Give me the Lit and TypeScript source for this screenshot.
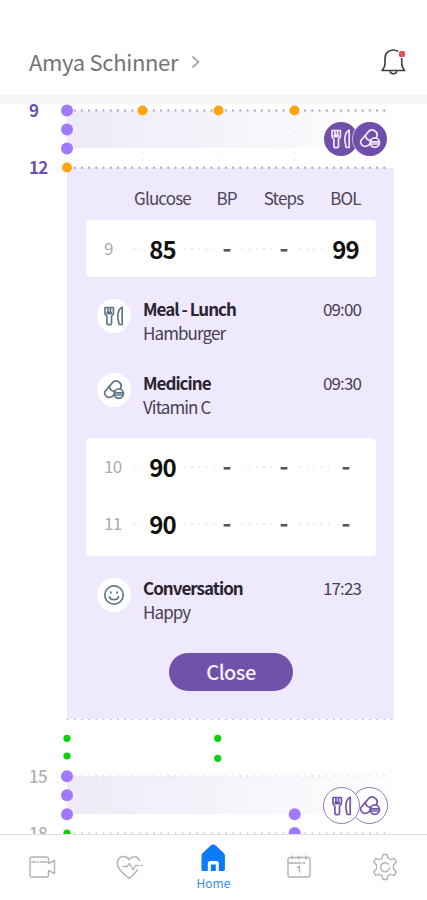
import { LitElement, html, svg, css } from "lit";
import { customElement, property } from "lit/decorators.js";

type Dot = [number, number, "violet" | "orange" | "green"];

const PALETTE = { violet: "#a179ff", orange: "#fda50f", green: "#0bd20b" };

const fork = svg`
  <path d="M1 1.500h8.400v5.800c0 1.500-.8 2.300-1.900 2.900v7c0 2-4.600 2-4.600 0v-7C1.800 9.600 1 8.800 1 7.300z"/>
  <path d="M3.900 1.800v4.400M6.500 1.800v4.400M3.200 6.400h4v1.300h-4z"/>
  <path d="M18.200 1.200v17.300h-2.400c-1 0-1.200-1-1.200-3.300-1.300-3.600-1.300-12 3.600-14z"/>`;

const pill = svg`
  <path d="M2 10.200 8.300 2.900a5 5 0 0 1 8.200 5.600M9.700 15c-2 2.500-5.200 3.100-7.300 1.300S-.2 12.100 2 10.200"/>
  <path d="M5.400 6.300c.2 3.300 2.600 5.200 5.600 5"/>
  <circle cx="14.800" cy="13.600" r="4.700"/>
  <path d="M10.400 12.800h8.800M10.600 15h8.400"/>`;

const smile = svg`
  <circle cx="10" cy="10" r="9.200"/>
  <path d="M5.400 11.800c1.200 3.900 8 3.900 9.200 0M6.900 7v1M13.100 7v1"/>`;

const GLYPHS: Record<string, unknown> = { fork, pill, smile };

@customElement("line-glyph")
class LineGlyph extends LitElement {
  @property() name = "fork";
  static styles = css`
    :host { display: block; width: 20px; height: 20px; }
    svg { display: block; width: 100%; height: 100%; overflow: visible; fill: none; stroke: currentColor; stroke-width: 1.7; stroke-linejoin: round; stroke-linecap: round; }
  `;
  render() {
    return html`<svg viewBox="0 0 20 20">${GLYPHS[this.name]}</svg>`;
  }
}

@customElement("app-root")
class AppRoot extends LitElement {
  static styles = css`
    :host {
      display: flex; flex-direction: column; width: 427px; height: 900px; overflow: hidden;
      background: #fff; color: #45404f;
      font-family: "Noto Sans CJK KR", "Noto Sans CJK SC", sans-serif;
      font-size: 17px;
    }
    * { box-sizing: border-box; }
    svg { display: block; }
    .header {
      flex: none; height: 104px; padding: 29px 20px 0 29px; border-bottom: 9px solid #f6f6f6;
      display: flex; align-items: center;
    }
    .name { font-size: 22px; line-height: 30px; margin-bottom: 3px; color: #747474; letter-spacing: -0.32px; white-space: nowrap; }
    .chevron { margin-left: 13px; }
    .bell { margin-left: auto; }
    .strip { display: grid; grid-template-columns: 66px 1fr; flex: none; position: relative; z-index: 1; }
    .strip.top { height: 64px; }
    .strip.bottom { height: 115px; overflow: hidden; }
    .plot { grid-area: 1 / 1 / 2 / 3; overflow: visible; }
    .hours { grid-area: 1 / 1; display: flex; flex-direction: column; padding-left: 29px; gap: 33px; }
    .hour { height: 24px; line-height: 24px; font-size: 17px; font-weight: 700; color: #6d50ae; letter-spacing: -0.7px; }
    .top .hours { margin-top: -6px; }
    .bottom .hours { padding-top: 45px; }
    .bottom .hour { color: #b0b0b0; font-weight: 500; }
    .chips { grid-area: 1 / 2; display: flex; justify-self: end; }
    .top .chips { margin: 18px 40px 0 0; }
    .bottom .chips { margin: 68px 39px 0 0; }
    .chip {
      width: 34px; height: 34px; border-radius: 50%; background: #6f4fa9; color: #f3eaff;
      display: grid; place-items: center;
    }
    .chip.second { margin-left: -5px; box-shadow: -1px 0 0 0 #c9b8e6; }
    .bottom .chip { width: 37px; height: 37px; background: #fff; color: #7355ab; border: 1.5px solid #8f7abb; }
    .bottom .chip.first { z-index: 1; }
    .bottom .chip.second { margin-left: -9px; box-shadow: none; }
    .panel {
      flex: none; width: 327px; height: 551px; margin-left: 67px; padding: 0 18px 0 19px;
      background: #efe9fe; display: flex; flex-direction: column;
    }
    .row { display: grid; grid-template-columns: 44px 65px 63px 51px 67px; align-items: center; justify-items: center; }
    .row > :last-child { margin-left: 6px; }
    .heads { height: 52px; padding-top: 7px; font-size: 17px; letter-spacing: -0.85px; white-space: nowrap; color: #4b4558; }
    .card { background: #fff; border-radius: 4px; flex: none; }
    .card.one { height: 57px; }
    .card.two { height: 118px; }
    .reading {
      height: 57px; background: radial-gradient(circle, #ececf0 0.8px, transparent 1.4px) 45px 50% / 7.2px 4px repeat-x;
      background-clip: content-box; background-origin: border-box; padding-right: 20px;
    }
    .time { justify-self: start; width: 46px; padding-left: 18px; background: #fff; color: #ababab; font-size: 17px; line-height: 26px; letter-spacing: -0.8px; margin-top: -1px; }
    .value { font-size: 24px; line-height: 30px; font-weight: 700; color: #111; letter-spacing: -0.9px; background: #fff; padding: 0 7px; }
    .empty { padding: 0 7px 3px; color: #555; }
    .events { display: flex; flex-direction: column; gap: 26px; flex: none; padding: 21px 15px 0 11px; }
    .events.first { height: 161px; }
    .event { display: flex; line-height: 24px; height: 48px; white-space: nowrap; }
    .badge { width: 34px; height: 34px; margin-top: 1px; border-radius: 50%; background: #fff; color: #607686; display: grid; place-items: center; }
    .info { margin: -1.5px 0 0 12px; }
    .title { font-weight: 700; color: #29242f; letter-spacing: -0.98px; }
    .title.wide { letter-spacing: -1.02px; }
    .note { letter-spacing: -0.9px; }
    .at { margin: -1.5px 0 0 auto; letter-spacing: -0.9px; }
    .close {
      align-self: center; margin: 28px 0 0 0; width: 124px; height: 38px; border: 0; border-radius: 19px;
      background: #7152aa; color: #f7effe; font: 500 20px/38px "Noto Sans CJK KR", "Noto Sans CJK SC", sans-serif;
      padding: 0; letter-spacing: -0.5px;
    }
    .nav { flex: 1; border-top: 1px solid #dedede; display: grid; grid-template-columns: repeat(5, 1fr); background: #fff; z-index: 2; }
    .tab { display: flex; flex-direction: column; align-items: center; padding-top: 18px; color: #b3b3b3; }
    .tab:first-child, .tab:nth-child(2), .tab:last-child { padding-left: 1px; }
    .tab.active { padding-top: 8px; color: #0b7bf7; font-size: 12px; line-height: 16px; gap: 3px; }
    .tab.active span { font-weight: 400; color: #338cf8; }
    .line { fill: none; stroke: currentColor; stroke-width: 1.4; stroke-linejoin: round; stroke-linecap: round; }
  `;

  private dots(list: Dot[]) {
    return list.map(([x, y, tone]) =>
      svg`<circle cx=${x} cy=${y} r=${tone === "violet" ? 6 : tone === "orange" ? 5 : 3.6} fill=${PALETTE[tone]} />`);
  }

  private rule(x1: number, y1: number, x2: number, y2: number, color: string, width = 2.4) {
    return svg`<line x1=${x1} y1=${y1} x2=${x2} y2=${y2} stroke=${color} stroke-width=${width} stroke-dasharray="0 7.2" stroke-linecap="round" />`;
  }

  private band(id: string, y: number, height: number) {
    return svg`
      <defs><linearGradient id=${id}><stop offset="0" stop-color="#eeebf6"/><stop offset=".45" stop-color="#f4f3fa"/><stop offset="1" stop-color="#fefefe"/></linearGradient></defs>
      <rect x="67" y=${y} width="327" height=${height} fill="url(#${id})" />`;
  }

  private chips() {
    return html`<div class="chips">
      <div class="chip first"><line-glyph name="fork"></line-glyph></div>
      <div class="chip second"><line-glyph name="pill"></line-glyph></div>
    </div>`;
  }

  private reading(time: string, values: string[]) {
    return html`<div class="row reading">
      <span class="time">${time}</span>
      ${values.map((v) => html`<span class="value ${v === "-" ? "empty" : ""}">${v}</span>`)}
    </div>`;
  }

  private event(icon: string, title: string, note: string, at: string) {
    return html`<div class="event">
      <div class="badge"><line-glyph name=${icon}></line-glyph></div>
      <div class="info"><div class="title">${title}</div><div class="note">${note}</div></div>
      <div class="at">${at}</div>
    </div>`;
  }

  render() {
    return html`
      <div class="header">
        <div class="name">Amya Schinner</div>
        <svg class="chevron" width="9" height="14" viewBox="0 0 9 14"><path d="M1.500 1.500 7.500 7l-6 5.500" fill="none" stroke="#a9a9a9" stroke-width="1.800"/></svg>
        <svg class="bell" width="27" height="28" viewBox="0 0 27 28">
          <path d="M2 22.500c2.200-2.300 3-4 3-7.300V10.500C5 5.600 8.200 2 13.300 2s8.400 3.600 8.400 8.500v4.700c0 3.300.8 5 3 7.300z" fill="none" stroke="#3a3f42" stroke-width="1.600" stroke-linejoin="round"/>
          <path d="M10 23.200c.5 3.500 6.200 3.500 6.700 0" fill="none" stroke="#3a3f42" stroke-width="1.600"/>
          <rect x="18" y="2" width="8" height="8" rx="2" fill="#fff"/>
          <rect x="19" y="3" width="6" height="6" rx="1.500" fill="#ea4d55"/>
        </svg>
      </div>

      <div class="strip top">
        <svg class="plot" width="427" height="64">
          ${this.band("morning", 7, 37)}
          ${this.rule(67.500, 6.500, 390, 6.500, "#b5a8d8")}
          ${this.rule(67.500, 63.700, 390, 63.700, "#b5a8d8")}
          ${[142.500, 218.500, 294.500].map((x) => this.rule(x, 13, x, 60, "#e6e3ec", 1.600))}
          ${this.dots([
            [67, 6.500, "violet"], [67, 25.500, "violet"], [67, 44.500, "violet"], [67, 63.500, "orange"],
            [142.500, 6.500, "orange"], [218.500, 6.500, "orange"], [294.500, 6.500, "orange"],
          ])}
        </svg>
        <div class="hours"><div class="hour">9</div><div class="hour">12</div></div>
        ${this.chips()}
      </div>

      <div class="panel">
        <div class="row heads"><span></span><span>Glucose</span><span>BP</span><span>Steps</span><span>BOL</span></div>
        <div class="card one">${this.reading("9", ["85", "-", "-", "99"])}</div>
        <div class="events first">
          ${this.event("fork", "Meal - Lunch", "Hamburger", "09:00")}
          ${this.event("pill", "Medicine", "Vitamin C", "09:30")}
        </div>
        <div class="card two">
          ${this.reading("10", ["90", "-", "-", "-"])}
          ${this.reading("11", ["90", "-", "-", "-"])}
        </div>
        <div class="events">${this.event("smile", "Conversation", "Happy", "17:23")}</div>
        <button class="close">Close</button>
      </div>

      <div class="strip bottom">
        <svg class="plot" width="427" height="115">
          ${this.band("afternoon", 57, 38)}
          ${this.rule(67.500, 0, 394, 0, "#c9bfe2")}
          ${this.rule(67.500, 57, 390, 57, "#dedbe3", 1.800)}
          ${this.rule(67.500, 114, 390, 114, "#d8d5dd", 1.800)}
          ${this.dots([
            [67, 19.300, "green"], [67, 37, "green"], [217.700, 19.300, "green"], [217.700, 39.300, "green"],
            [67, 57.300, "violet"], [67, 76.300, "violet"], [67, 95.200, "violet"], [67, 114, "green"],
            [294.700, 95.200, "violet"], [294.700, 114, "violet"],
          ])}
        </svg>
        <div class="hours"><div class="hour">15</div><div class="hour">18</div></div>
        ${this.chips()}
      </div>

      <div class="nav">
        <div class="tab"><svg class="line" width="28" height="28" viewBox="0 0 28 28">
          <path d="M3 4h14.500a2 2 0 0 1 2 2v4.500l6-3v13l-6-3V22a2 2 0 0 1-2 2H3a2 2 0 0 1-2-2V6a2 2 0 0 1 2-2zM3 9h3M8 9h1M11 9h7"/></svg></div>
        <div class="tab"><svg class="line" width="28" height="28" viewBox="0 0 28 28">
          <path d="M24.500 7.500C22.500 2.600 16.800 2.600 14 6.500 11 2 4 2.500 2.500 8.500 1 15 8 20 14 25.500c3.500-3.200 6.500-5.500 8.500-8.500M8 13.500h4l2.500-3 3.500 6 2.500-4h3M26 12.500h1"/></svg></div>
        <div class="tab active"><svg width="26" height="29" viewBox="0 0 26 29">
          <path fill="currentColor" d="M1.500 12.500c0-1 .4-1.900 1.200-2.600l8-7.500c1.400-1.300 3.600-1.300 5 0l8 7.500c.8.700 1.200 1.600 1.200 2.600V26.500a1.500 1.500 0 0 1-1.500 1.500H18.800v-7.500a2.500 2.500 0 0 0-2.500-2.500h-6a2.500 2.500 0 0 0-2.500 2.500V28H3a1.500 1.500 0 0 1-1.500-1.500z"/>
          <path fill="currentColor" d="M10.800 28v-6.500h5V28z"/></svg><span>Home</span></div>
        <div class="tab"><svg class="line" width="28" height="28" viewBox="0 0 28 28">
          <path d="M5 4.500h18a2 2 0 0 1 2 2V22a2 2 0 0 1-2 2H5a2 2 0 0 1-2-2V6.500a2 2 0 0 1 2-2zM3 10h13M18 10h2M7 3v3M14 3v3M21 3v3M12.500 14.500l2-1V19"/></svg></div>
        <div class="tab"><svg class="line" width="28" height="28" viewBox="0 0 28 28">
          <path d="M12 1.500h4l.8 3.500 2.900 1.700 3.600-1.200 2 3.500L22.500 12v4l2.800 2.900-2 3.500-3.600-1.100-2.900 1.700-.8 3.500h-4l-.8-3.500-2.900-1.700-3.600 1.100-2-3.500L5.500 16v-4L2.700 9l2-3.500 3.600 1.200L11.200 5z"/>
          <path d="M17.500 11.300a4.500 4.500 0 1 0 1 3.700"/></svg></div>
      </div>
    `;
  }
}
